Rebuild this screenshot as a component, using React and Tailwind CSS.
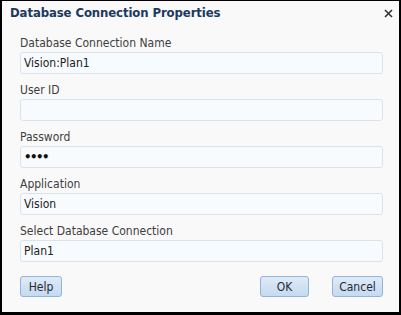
import React from 'react';

const fields = [
  { label: 'Database Connection Name', value: 'Vision:Plan1' },
  { label: 'User ID', value: '' },
  { label: 'Password', value: '••••', password: true },
  { label: 'Application', value: 'Vision' },
  { label: 'Select Database Connection', value: 'Plan1' },
];

function Button({ children, className = '' }) {
  return (
    <button
      className={`h-[21px] rounded-[3px] border border-[#93b4d6] bg-gradient-to-b from-[#dfeaf6] to-[#c5daf0] text-[12px] text-[#1e2a38] leading-none ${className}`}
    >
      {children}
    </button>
  );
}

export default function App() {
  return (
    <div
      className="w-[401px] h-[315px] bg-[#f9f9f9] border-l-2 border-r-2 border-t border-b-[3px] border-black flex flex-col"
      style={{ fontFamily: '"DejaVu Sans Condensed", Tahoma, "DejaVu Sans", sans-serif' }}
    >
      <div className="h-[24px] flex items-center justify-between pl-[8px] pr-[6px]">
        <span className="text-[13px] font-bold text-[#1c3a5e] tracking-[-0.1px]">Database Connection Properties</span>
        <svg width="9" height="9" viewBox="0 0 9 9" className="mt-[1px]">
          <path d="M1 1 L8 8 M8 1 L1 8" stroke="#333" strokeWidth="1.6" />
        </svg>
      </div>
      <div className="flex flex-col gap-[8px] pl-[18px] pr-[16px] pt-[10px]">
        {fields.map((f) => (
          <div key={f.label} className="flex flex-col">
            <label className="h-[16px] leading-[16px] text-[12px] text-[#3e3e3e]">{f.label}</label>
            <div className="mt-[1px] h-[22px] rounded-[3px] border border-[#dbe3ea] bg-[#f7fbfe] flex items-center px-[3px] text-[12px] text-[#222]">
              {f.password ? (
                <span className="text-[13px] font-bold tracking-[-1.5px] text-[#111]">{f.value}</span>
              ) : (
                f.value
              )}
            </div>
          </div>
        ))}
      </div>
      <div className="flex items-center pl-[18px] pr-[16px] mt-[14px]">
        <Button className="w-[42px]">Help</Button>
        <div className="flex-1" />
        <Button className="w-[49px]">OK</Button>
        <Button className="w-[51px] ml-[23px]">Cancel</Button>
      </div>
    </div>
  );
}
